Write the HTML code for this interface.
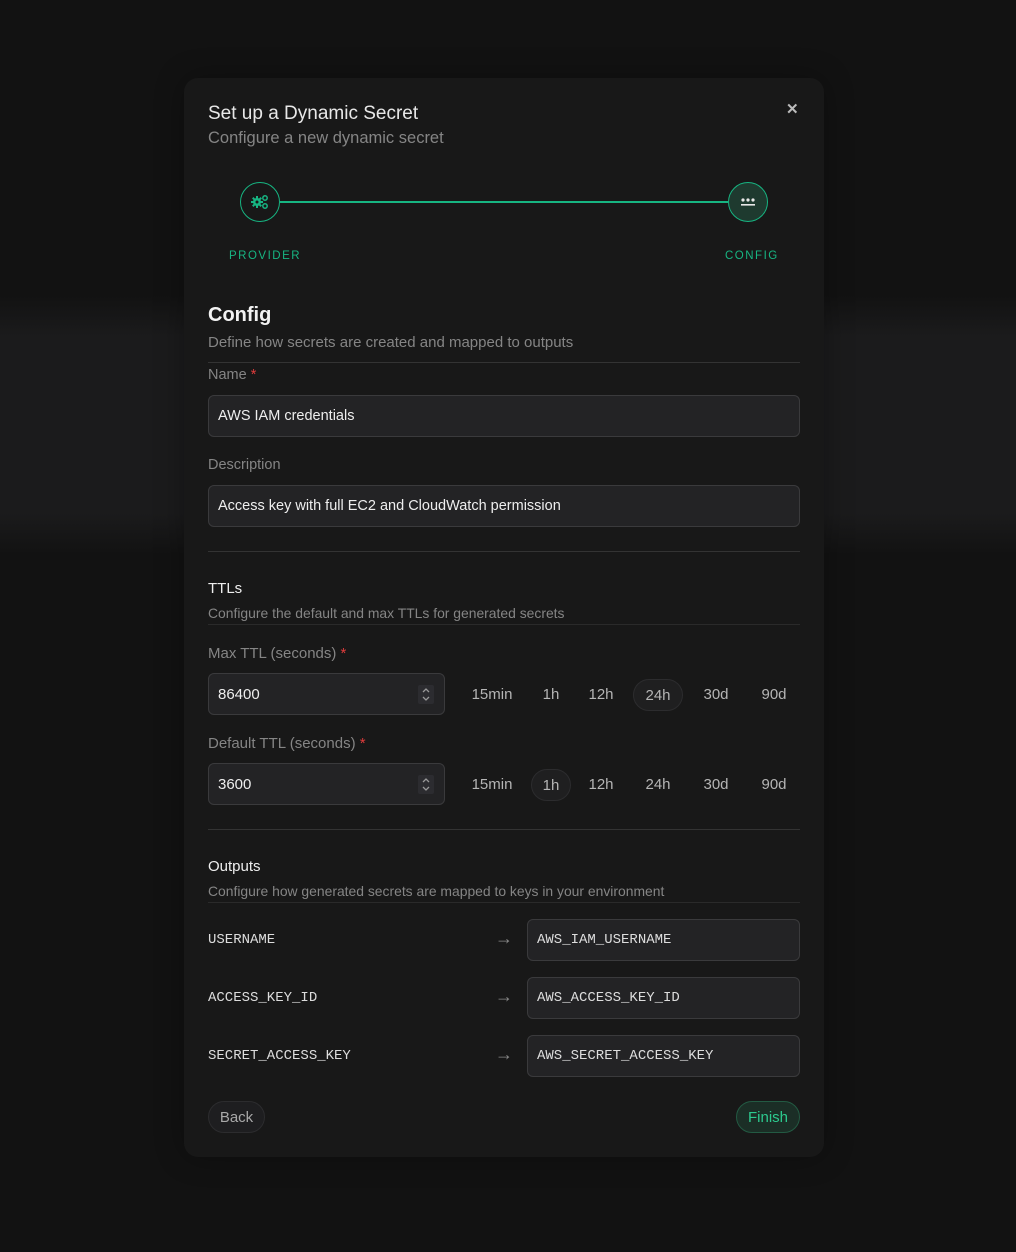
<!DOCTYPE html>
<html><head><meta charset="utf-8">
<style>
*{margin:0;padding:0;box-sizing:border-box}
html,body{width:1016px;height:1252px;overflow:hidden}
body{background:#121212;font-family:"Liberation Sans",sans-serif;position:relative}
.band{position:absolute;left:0;right:0;top:295px;height:260px;background:linear-gradient(#121212 0%,#1b1b1c 16%,#1b1b1c 84%,#121212 100%)}
.modal{position:absolute;left:184px;top:78px;width:640px;height:1079px;background:#181818;border-radius:14px;box-shadow:0 0 30px rgba(0,0,0,.3)}
.a{position:absolute;white-space:nowrap}
.hr{position:absolute;left:208px;width:592px;height:1px;background:#333}
.inp{position:absolute;background:#232325;border:1px solid #3a3a3c;border-radius:6px;color:#eee;font-size:14.5px;padding-left:9px;display:flex;align-items:center}
.lbl{font-size:14.5px;color:#858585}
.req{color:#e03c3c}
.mono{font-family:"Liberation Mono",monospace;font-size:14px;color:#ddd}
.pre{position:absolute;font-size:15px;color:#b5b5b5;text-align:center;line-height:32px;height:32px;border-radius:16px}
.pill{background:#1f1f20;border:1px solid #2c2c2e}
.spin{position:absolute;right:10px;top:11px;width:16px;height:19px;background:#2c2c30;border-radius:2px}
</style></head><body>
<div class="band"></div>
<div class="modal"></div>

<div class="a" style="left:208px;top:103px;font-size:19px;color:#e8e8e8">Set up a Dynamic Secret</div>
<div class="a" style="left:208px;top:129px;font-size:16.5px;color:#858585">Configure a new dynamic secret</div>
<div class="a" style="left:786px;top:100px;font-size:15px;color:#bbb;font-weight:bold">✕</div>

<div style="position:absolute;left:280px;top:201px;width:448px;height:2px;background:#17b582"></div>
<div style="position:absolute;left:240px;top:182px;width:40px;height:40px;border:1.5px solid #17b582;border-radius:50%;background:#181818"></div>
<svg style="position:absolute;left:251px;top:194px" width="18" height="16" viewBox="0 0 18 16">
<g fill="#17b582"><circle cx="6" cy="8" r="4"/><rect x="5" y="2" width="2" height="12"/><rect x="0" y="7" width="12" height="2"/><rect x="5" y="2" width="2" height="12" transform="rotate(45 6 8)"/><rect x="5" y="2" width="2" height="12" transform="rotate(-45 6 8)"/></g>
<circle cx="6" cy="8" r="1.5" fill="#181818"/>
<circle cx="14" cy="4" r="2.2" fill="none" stroke="#17b582" stroke-width="1.5"/><circle cx="14" cy="12" r="2.2" fill="none" stroke="#17b582" stroke-width="1.5"/>
</svg>
<div style="position:absolute;left:728px;top:182px;width:40px;height:40px;border:1.5px solid #17b582;border-radius:50%;background:#1e3a2f"></div>
<svg style="position:absolute;left:740px;top:196px" width="16" height="12" viewBox="0 0 16 12">
<g fill="#e8e8e8"><circle cx="3" cy="4" r="1.6"/><circle cx="8" cy="4" r="1.6"/><circle cx="13" cy="4" r="1.6"/><rect x="1" y="8" width="14" height="1.6"/></g></svg>
<div class="a" style="left:229px;top:250px;font-size:11.5px;letter-spacing:1.5px;color:#17b582">PROVIDER</div>
<div class="a" style="left:725px;top:250px;font-size:11.5px;letter-spacing:1.5px;color:#17b582">CONFIG</div>

<div class="a" style="left:208px;top:304px;font-size:20px;font-weight:bold;color:#f2f2f2">Config</div>
<div class="a" style="left:208px;top:334px;font-size:15px;color:#858585">Define how secrets are created and mapped to outputs</div>
<div class="hr" style="top:362px"></div>
<div class="a lbl" style="left:208px;top:367px">Name <span class="req">*</span></div>
<div class="inp" style="left:208px;top:395px;width:592px;height:42px">AWS IAM credentials</div>
<div class="a lbl" style="left:208px;top:457px">Description</div>
<div class="inp" style="left:208px;top:485px;width:592px;height:42px">Access key with full EC2 and CloudWatch permission</div>
<div class="hr" style="top:551px"></div>

<div class="a" style="left:208px;top:580px;font-size:15px;color:#eee">TTLs</div>
<div class="a" style="left:208px;top:605px;font-size:13.9px;color:#858585">Configure the default and max TTLs for generated secrets</div>
<div class="hr" style="top:624px;background:#2a2a2a"></div>
<div class="a lbl" style="left:208px;top:645px;font-size:15px">Max TTL (seconds) <span class="req">*</span></div>
<div class="inp" style="left:208px;top:673px;width:237px;height:42px;font-size:15px">86400<div class="spin"><svg width="16" height="19" viewBox="0 0 16 19"><path d="M5 7l3-3 3 3M5 12l3 3 3-3" fill="none" stroke="#999" stroke-width="1.3"/></svg></div></div>
<div class="pre" style="left:467px;top:679px;width:50px">15min</div>
<div class="pre" style="left:531px;top:679px;width:40px">1h</div>
<div class="pre" style="left:581px;top:679px;width:40px">12h</div>
<div class="pre pill" style="left:633px;top:679px;width:50px">24h</div>
<div class="pre" style="left:696px;top:679px;width:40px">30d</div>
<div class="pre" style="left:754px;top:679px;width:40px">90d</div>

<div class="a lbl" style="left:208px;top:735px;font-size:15px">Default TTL (seconds) <span class="req">*</span></div>
<div class="inp" style="left:208px;top:763px;width:237px;height:42px;font-size:15px">3600<div class="spin"><svg width="16" height="19" viewBox="0 0 16 19"><path d="M5 7l3-3 3 3M5 12l3 3 3-3" fill="none" stroke="#999" stroke-width="1.3"/></svg></div></div>
<div class="pre" style="left:467px;top:769px;width:50px">15min</div>
<div class="pre pill" style="left:531px;top:769px;width:40px">1h</div>
<div class="pre" style="left:581px;top:769px;width:40px">12h</div>
<div class="pre" style="left:633px;top:769px;width:50px">24h</div>
<div class="pre" style="left:696px;top:769px;width:40px">30d</div>
<div class="pre" style="left:754px;top:769px;width:40px">90d</div>
<div class="hr" style="top:829px"></div>

<div class="a" style="left:208px;top:858px;font-size:15px;color:#eee">Outputs</div>
<div class="a" style="left:208px;top:883px;font-size:13.9px;color:#858585">Configure how generated secrets are mapped to keys in your environment</div>
<div class="hr" style="top:902px;background:#2a2a2a"></div>

<div class="a mono" style="left:208px;top:932px">USERNAME</div>
<div class="a" style="left:495px;top:928px;font-size:18px;color:#888">→</div>
<div class="inp mono" style="left:527px;top:919px;width:273px;height:42px">AWS_IAM_USERNAME</div>
<div class="a mono" style="left:208px;top:990px">ACCESS_KEY_ID</div>
<div class="a" style="left:495px;top:986px;font-size:18px;color:#888">→</div>
<div class="inp mono" style="left:527px;top:977px;width:273px;height:42px">AWS_ACCESS_KEY_ID</div>
<div class="a mono" style="left:208px;top:1048px">SECRET_ACCESS_KEY</div>
<div class="a" style="left:495px;top:1044px;font-size:18px;color:#888">→</div>
<div class="inp mono" style="left:527px;top:1035px;width:273px;height:42px">AWS_SECRET_ACCESS_KEY</div>

<div class="a" style="left:208px;top:1101px;width:57px;height:32px;border-radius:16px;background:#1e1e20;border:1px solid #2c2c2e;color:#a8a8a8;font-size:15px;text-align:center;line-height:31px">Back</div>
<div class="a" style="left:736px;top:1101px;width:64px;height:32px;border-radius:16px;background:#1b2e26;border:1px solid #235a43;color:#2cc98e;font-size:15px;text-align:center;line-height:31px">Finish</div>
</body></html>
